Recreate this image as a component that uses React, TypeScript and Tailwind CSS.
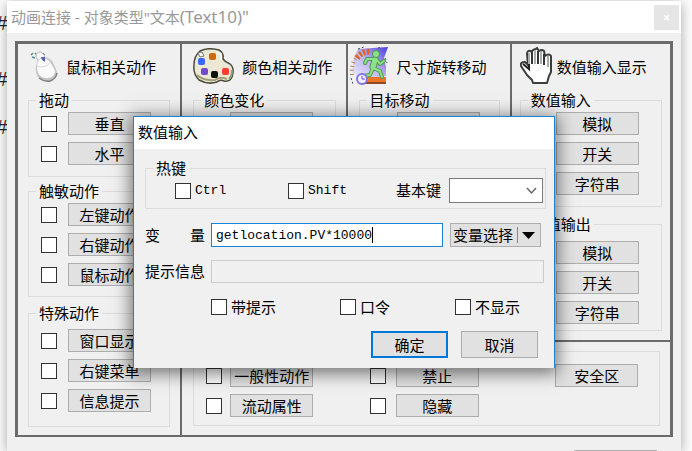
import type { ReactNode } from "react";
import clsx from "clsx";

const MouseIcon = () => (
    <svg width="30" height="34" viewBox="0 0 30 34" aria-hidden="true">
        <path d="M1 6 L3 4 M5 4 L8 7 M2 8 L5 9" stroke="#4f8a90" strokeWidth="1.5" />
        <path d="M6 8 Q6 2 11 3 L15 7 L9 13 Z" fill="#f6f6f6" stroke="#b9b9b9" />
        <path d="M11 9 Q18 7 22 12 Q25 17 27 23 Q27 30 20 32 Q12 33 8 28 Q5 24 6 17 Q7 11 11 9Z" fill="#c4c4c4" />
        <path d="M10 10 Q17 8 20 13 Q23 17 25 22 Q25 28 18 29 Q11 30 8 24 Q5 15 10 10Z" fill="#fafafa" />
        <path d="M7 17 Q15 20 21 13" fill="none" stroke="#d6d6d6" />
        <path d="M9 29 Q14 33 20 32 Q26 30 27 24" fill="none" stroke="#7f7f7f" strokeWidth="1.5" />
        <path d="M11 8 L15 8 L15 13 L12 11Z" fill="#5864ad" />
        <path d="M13 4 L15 6" stroke="#76909a" />
    </svg>
);

const PaletteIcon = () => (
    <svg width="41" height="36" viewBox="0 0 41 36" aria-hidden="true">
        <path
            d="M7 3 Q15 -1 26 2 Q31 5 30 11 Q32 14 37 16 Q42 20 39 29 Q37 34 31 33 Q27 31 24 34 Q15 37 6 32 Q0 26 1 17 Q1 8 7 3Z"
            fill="#ece8d6"
            stroke="#4d4c3b"
            strokeWidth="1.5"
        />
        <path d="M4 27 Q10 33 22 32 Q27 28 34 31 M39 22 Q39 28 36 31" fill="none" stroke="#a19c78" strokeWidth="2" />
        <path d="M5 5 L9 4 L11 8 L7 9Z" fill="#f8f8f8" stroke="#777" />
        <path d="M24 4 L28 6 L28 12" fill="none" stroke="#faf9ee" strokeWidth="2" />
        <rect x="16" y="5" width="7" height="7" rx="2" fill="#c96a10" />
        <rect x="5" y="10" width="7" height="7" rx="2" fill="#3669f5" />
        <rect x="8" y="20" width="7" height="7" rx="2" fill="#704bc8" />
        <rect x="18" y="23" width="7" height="7" rx="2" fill="#11120a" />
        <rect x="29" y="20" width="7" height="7" rx="2" fill="#fa3e2b" />
    </svg>
);

const RunnerIcon = () => (
    <svg width="41" height="40" viewBox="0 0 41 40" aria-hidden="true">
        <defs>
            <linearGradient id="sky" x1="0" y1="1" x2="1" y2="0">
                <stop offset="0" stopColor="#efedfd" />
                <stop offset="0.5" stopColor="#bdb5f2" />
                <stop offset="1" stopColor="#4a3be0" />
            </linearGradient>
        </defs>
        <path d="M10 3 L40 1 L36 12 L38 21 L38 30 L12 33 L4 26 L6 12Z" fill="url(#sky)" />
        <path d="M4 29 Q2 8 22 6" fill="none" stroke="#b98a50" strokeWidth="4" strokeDasharray="1 3" />
        <path d="M9 12 Q14 5 22 6" fill="none" stroke="#e8601a" strokeWidth="6" strokeDasharray="2 2" />
        <path d="M3 32 L5 38 M10 3 L16 1 M30 2 L34 1 M37 12 L39 17" stroke="#37506b" strokeDasharray="2 2" />
        <path d="M20 31 L38 31 L38 37 L17 37Z" fill="#ec7628" />
        <path d="M17 37 L38 37" stroke="#8f4a28" strokeWidth="2" />
        <g fill="none" strokeLinecap="round" strokeLinejoin="round">
            <path d="M27 13 L25 22 L32 25 L34 31 M25 22 L22 29 L16 30 M26 13 L19 13 L17 17 M29 14 L32 18 L36 15" stroke="#4c9a4c" strokeWidth="4" />
            <path d="M27 14 L25 21" stroke="#4c9a4c" strokeWidth="7" />
            <path d="M27 14 L25 21" stroke="#8fe08b" strokeWidth="5" />
            <path d="M27 13 L25 22 L32 25 L34 31 M25 22 L22 29 L16 30 M26 13 L19 13 L17 17 M29 14 L32 18 L36 15" stroke="#8fe08b" strokeWidth="2" />
        </g>
        <circle cx="28" cy="8" r="3.500" fill="#8fe08b" stroke="#4c9a4c" />
        <circle cx="14" cy="33" r="5" fill="#f2f0ff" stroke="#8176e0" strokeWidth="2" />
        <path d="M14 30 V33 H17" fill="none" stroke="#5a4bc8" />
    </svg>
);

const HandIcon = () => (
    <svg width="33" height="38" viewBox="0 0 33 38" aria-hidden="true">
        <path
            d="M13 36 L12 33 L7 28 L1 19 Q0 15 5 15 L8 18 L7 7 Q7 3 11 4 L12 6 L12 4 Q14 2 16 2 L17 1 L19 4 Q22 2 24 4 L25 9 Q29 6 31 9 L31 25 L29 29 L27 36Z"
            fill="#fff"
            stroke="#3a3f3d"
            strokeWidth="2"
            strokeLinejoin="round"
        />
        <path d="M12 5 V17 M18 4 V17 M24 7 V18" stroke="#333836" strokeWidth="2" />
        <path d="M9 6 V18 M15 3 V17 M21 4 V17 M28 9 V20" stroke="#a9adab" strokeWidth="2" />
        <path d="M3 17 L9 22 L9 17" fill="none" stroke="#222" strokeWidth="2" />
    </svg>
);

const Check = ({ label, id }: { label?: string; id?: string }) => (
    <input
        type="checkbox"
        id={id}
        aria-label={label}
        className="size-4 shrink-0 appearance-none border border-[#333] bg-white checked:bg-[#0078d7]"
    />
);

const PushButton = ({ children }: { children: ReactNode }) => (
    <button type="button" className="h-[23px] w-[83px] shrink-0 border border-[#adadad] bg-[#e1e1e1] leading-5 whitespace-nowrap">
        {children}
    </button>
);

const Action = ({ label, gap = "gap-2" }: { label: string; gap?: string }) => (
    <div className={clsx("flex items-center", gap)}>
        <Check label={label} />
        <PushButton>{label}</PushButton>
    </div>
);

type GroupProps = { title: string; items: string[]; className?: string; gap?: string };

const Group = ({ title, items, className, gap }: GroupProps) => (
    <fieldset className={clsx("min-w-0 border border-[#dcdcdc]", className)}>
        <legend className="ml-[7px] h-4 px-[3px] leading-4">{title}</legend>
        <div className="flex flex-col gap-[7px]">
            {items.map((item) => (
                <Action key={item} label={item} gap={gap} />
            ))}
        </div>
    </fieldset>
);

const Heading = ({ icon, title, className }: { icon: ReactNode; title: string; className?: string }) => (
    <h2 className={clsx("mb-1 flex h-11 items-center whitespace-nowrap", className)}>
        {icon}
        <span className="pt-0.5">{title}</span>
    </h2>
);

const Option = ({ id, label, className }: { id: string; label: string; className?: string }) => (
    <div className={clsx("flex items-center gap-1", className)}>
        <Check id={id} />
        <label htmlFor={id} className="leading-4">{label}</label>
    </div>
);

function InputDialog() {
    return (
        <section
            role="dialog"
            aria-labelledby="dialog-title"
            className="absolute top-[116px] left-[133px] w-[422px] border border-b-0 border-[#1883d7] bg-[#f0f0f0] shadow-[0_3px_16px_3px_rgba(0,0,0,0.5)]"
        >
            <h1 id="dialog-title" className="h-8 bg-white pl-1 leading-[30px]">数值输入</h1>
            <form className="pt-[11px] pr-2 pb-2.5 pl-[11px]">
                <fieldset className="min-w-0 border border-[#dcdcdc]">
                    <legend className="ml-[7px] h-4 px-[3px] leading-4">热键</legend>
                    <div className="flex items-center pt-0.5 pr-0.5 pb-[5px] pl-[29px]">
                        <Option id="ctrl" label="Ctrl" className="w-[113px] font-['Liberation_Mono',monospace] text-[13px]" />
                        <Option id="shift" label="Shift" className="w-[108px] font-['Liberation_Mono',monospace] text-[13px]" />
                        <label htmlFor="base-key" className="w-[53px]">基本键</label>
                        <div className="relative flex-1">
                            <select id="base-key" className="block h-[25px] w-full appearance-none border border-[#7a7a7a] bg-white">
                                <option></option>
                            </select>
                            <svg className="pointer-events-none absolute top-2 right-1.5" width="11" height="10" viewBox="0 0 11 10" aria-hidden="true">
                                <path d="M1 2 L5.500 7 L10 2" fill="none" stroke="#666" strokeWidth="1.500" />
                            </svg>
                        </div>
                    </div>
                </fieldset>

                <div className="mt-3.5 mr-[5px] flex h-6 items-center">
                    <label htmlFor="variable" className="mr-1.5 flex w-[60px] justify-between">
                        <span>变</span>
                        <span>量</span>
                    </label>
                    <div className="flex h-6 flex-1 items-center border border-[#1883d7] bg-white pl-1">
                        <input
                            id="variable"
                            defaultValue="getlocation.PV*10000"
                            className="field-sizing-content pt-0.5 font-['Liberation_Mono',monospace] text-[13px] outline-none"
                        />
                        <span className="h-4 w-px bg-black" />
                    </div>
                    <button type="button" className="ml-[7px] flex h-6 w-[91px] items-center border border-[#adadad] bg-[#e1e1e1] pl-0.5 whitespace-nowrap">
                        变量选择
                        <span className="ml-1 h-4 w-px bg-[#888]" />
                        <svg className="ml-1" width="13" height="7" viewBox="0 0 13 7" aria-hidden="true">
                            <path d="M0 0 H13 L6.500 7Z" />
                        </svg>
                    </button>
                </div>

                <div className="mt-[13px] mr-0.5 flex h-[23px] items-center">
                    <label htmlFor="hint" className="mr-1.5 w-[60px]">提示信息</label>
                    <input id="hint" disabled className="h-[23px] min-w-0 flex-1 border border-[#cccccc] bg-[#f0f0f0]" />
                </div>

                <div className="mt-4 flex h-4 items-center pl-[66px]">
                    <Option id="with-hint" label="带提示" className="w-[129px]" />
                    <Option id="password" label="口令" className="w-[115px]" />
                    <Option id="hidden" label="不显示" />
                </div>

                <div className="mt-4 mr-2 flex justify-end gap-[13px]">
                    <button type="button" className="h-[27px] w-[77px] border-2 border-[#0078d7] bg-[#e1e1e1] leading-5">确定</button>
                    <button type="button" className="h-[27px] w-[77px] border border-[#adadad] bg-[#e1e1e1] leading-5">取消</button>
                </div>
            </form>
        </section>
    );
}

export default function App() {
    return (
        <div className="relative flex h-screen overflow-hidden bg-[#fdfdfd] pt-px text-[15px] text-black font-['Noto_Sans_CJK_SC',sans-serif]">
            <div className="flex w-[7px] shrink-0 flex-col overflow-hidden pt-2 font-['Liberation_Sans',sans-serif] text-xl text-[#222] italic">
                <span className="-ml-1 h-14 leading-7">#</span>
                <span className="-ml-1 h-12 leading-7">#</span>
                <span className="-ml-1 leading-7">#</span>
            </div>

            <main className="mr-[11px] min-w-0 flex-1 bg-[#f0f0f0] shadow-[0_2px_12px_rgba(0,0,0,0.35)]">
                <header className="flex h-8 items-center justify-between bg-white pr-0.5 pl-1 text-[#999]">
                    <h1 className="font-['Noto_Sans','Noto_Sans_CJK_SC',sans-serif] leading-6">
                        动画连接 - 对象类型"文本<span className="text-[17px]">(Text10)"</span>
                    </h1>
                    <button type="button" aria-label="关闭" className="flex size-[25px] items-center justify-center bg-[#e5e5e5]">
                        <svg width="7" height="7" viewBox="0 0 7 7" aria-hidden="true">
                            <path d="M1 1 L6 6 M6 1 L1 6" stroke="#fff" strokeWidth="1.500" />
                        </svg>
                    </button>
                </header>

                <div className="p-2">
                    <div className="grid grid-cols-[162fr_163fr_162fr_158fr] gap-0.5 border-[3px] border-b-2 border-[#6b6b6b] bg-[#6b6b6b] [&>section]:min-w-0 [&>section]:bg-[#f0f0f0]">
                        <section className="row-span-2 px-2.5 pb-2">
                            <Heading icon={<MouseIcon />} title="鼠标相关动作" className="gap-1.5 pl-0.5" />
                            <Group title="拖动" items={["垂直", "水平"]} gap="gap-[11px]" className="pt-1 pb-[11px] [&>div]:pl-3" />
                            <Group title="触敏动作" items={["左键动作", "右键动作", "鼠标动作"]} gap="gap-[11px]" className="mt-1.5 pt-1 pb-2.5 [&>div]:pl-3" />
                            <Group title="特殊动作" items={["窗口显示", "右键菜单", "信息提示"]} gap="gap-[11px]" className="mt-2 pt-2 pb-3.5 [&>div]:pl-3" />
                        </section>

                        <section className="pr-2.5 pl-[11px]">
                            <Heading icon={<PaletteIcon />} title="颜色相关动作" className="gap-2" />
                            <Group title="颜色变化" items={["线属性", "填充属性"]} className="pt-1 pb-[11px] [&>div]:pl-3" />
                        </section>

                        <section className="pr-2.5 pl-[11px]">
                            <Heading icon={<RunnerIcon />} title="尺寸旋转移动" className="-ml-[11px] gap-2" />
                            <Group title="目标移动" items={["水平", "垂直"]} gap="gap-2.5" className="pt-1 pb-[11px] [&>div]:pl-[11px]" />
                        </section>

                        <section className="px-2 pb-[9px]">
                            <Heading icon={<HandIcon />} title="数值输入显示" className="gap-1" />
                            <Group title="数值输入" items={["模拟", "开关", "字符串"]} gap="gap-2.5" className="pt-1 pb-[11px] [&>div]:pl-[9px]" />
                            <Group title="数值输出" items={["模拟", "开关", "字符串"]} gap="gap-2.5" className="mt-[9px] pt-[9px] pb-1.5 [&>div]:pl-[9px]" />
                        </section>

                        <section className="col-span-3 pt-[9px] pr-2.5 pb-[9px] pl-[11px]">
                            <div className="grid grid-cols-[164fr_164fr_126fr] gap-y-[7px] border border-[#dcdcdc] pt-3 pb-2 pl-3">
                                <Action label="一般性动作" />
                                <Action label="禁止" gap="gap-2.5" />
                                <div className="flex pl-[22px]">
                                    <PushButton>安全区</PushButton>
                                </div>
                                <Action label="流动属性" />
                                <Action label="隐藏" gap="gap-2.5" />
                            </div>
                        </section>
                    </div>

                    <div className="mt-[13px] flex justify-end pr-4">
                        <PushButton>取消</PushButton>
                    </div>
                </div>
            </main>

            <InputDialog />
        </div>
    );
}
